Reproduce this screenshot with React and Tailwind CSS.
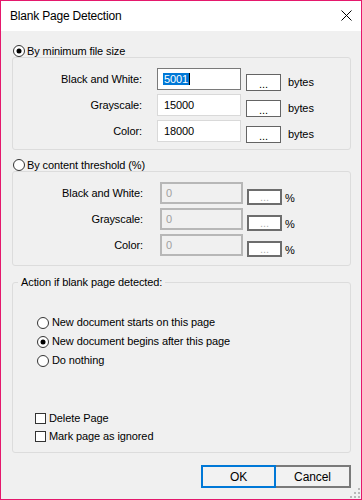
import React from "react";

const Radio = ({ checked }) => (
  <svg width="12" height="12" viewBox="0 0 12 12" className="shrink-0">
    <circle cx="6" cy="6" r="5.5" fill="#fff" stroke="#333" />
    {checked && <circle cx="6" cy="6" r="2.5" fill="#000" />}
  </svg>
);

const Checkbox = () => (
  <div className="w-[11px] h-[11px] shrink-0 border border-[#333] bg-white" />
);

const SizeRow = ({ label, value, selected }) => (
  <div className="flex items-start h-[22px]">
    <div className="w-[129px] h-[22px] flex items-center justify-end">{label}</div>
    <div
      className={
        "ml-[15px] w-[84px] h-[22px] bg-white border flex items-center pl-[5px] " +
        (selected ? "border-[#7a7a7a]" : "border-[#d9d9d9]")
      }
    >
      {selected ? (
        <>
          <span className="bg-[#0078d7] text-white leading-[12px] px-[1px]">{value}</span>
          <span className="w-px h-[12px] bg-black" />
        </>
      ) : (
        <span className="pl-[1px]">{value}</span>
      )}
    </div>
    <div className="ml-[5px] mt-[6px] h-[17px] flex items-center">
      <div className="w-[35px] h-[17px] border border-[#646464] bg-white flex items-end justify-center leading-[11px]">
        ...
      </div>
      <span className="ml-[7px] leading-[13px]">bytes</span>
    </div>
  </div>
);

const ThresholdRow = ({ label }) => (
  <div className="flex items-start h-[22px]">
    <div className="w-[130px] h-[22px] flex items-center justify-end">{label}</div>
    <div className="ml-[17px] w-[83px] h-[22px] border-2 border-[#b7b7b7] flex items-center pl-[4px] text-[#a0a0a0]">
      0
    </div>
    <div className="ml-[4px] mt-[7px] h-[16px] flex items-center">
      <div className="w-[35px] h-[16px] border-2 border-[#6d6d6d] bg-white flex items-end justify-center leading-[11px] text-[#b0b0b0]">
        ...
      </div>
      <span className="ml-[3px] mt-[3px] leading-[13px]">%</span>
    </div>
  </div>
);

export default function App() {
  return (
    <div className="relative w-[362px] h-[500px] border border-[#e5186c] bg-[#f0f0f0] flex flex-col font-['Liberation_Sans',Arial,sans-serif] text-[11px] leading-[13px] text-black tracking-[-0.1px]">
      <div className="h-[30px] shrink-0 bg-white flex items-start justify-between pl-[9px] pr-[9px]">
        <span className="mt-[8px] text-[12px] leading-[14px] tracking-[-0.2px]">Blank Page Detection</span>
        <svg width="11" height="11" viewBox="0 0 11 11" className="mt-[9px]">
          <path d="M0.5 0.5 L10.5 10.5 M10.5 0.5 L0.5 10.5" stroke="#000" strokeWidth="1" />
        </svg>
      </div>

      <div className="flex flex-col pl-[11px] pr-[10px]">
        <div className="mt-[14px] h-[12px] flex items-center pl-[1px]">
          <Radio checked />
          <span className="ml-[2px]">By minimum file size</span>
        </div>
        <div className="border border-[#dcdcdc] rounded-[3px] pt-[10px] pb-[7px] flex flex-col gap-[4px]">
          <SizeRow label="Black and White:" value="5001" selected />
          <SizeRow label="Grayscale:" value="15000" />
          <SizeRow label="Color:" value="18000" />
        </div>

        <div className="mt-[9px] h-[12px] flex items-center pl-[1px]">
          <Radio />
          <span className="ml-[2px]">By content threshold (%)</span>
        </div>
        <div className="border border-[#dcdcdc] rounded-[3px] pt-[10px] pb-[9px] flex flex-col gap-[4px]">
          <ThresholdRow label="Black and White:" />
          <ThresholdRow label="Grayscale:" />
          <ThresholdRow label="Color:" />
        </div>

        <div className="relative mt-[16px] border border-[#dcdcdc] rounded-[3px] pt-[30px] pb-[7px] flex flex-col">
          <span className="absolute -top-[7px] left-[5px] px-[3px] bg-[#f0f0f0] leading-[13px]">
            Action if blank page detected:
          </span>
          <div className="h-[19px] flex items-center pl-[24px]">
            <Radio />
            <span className="ml-[3px]">New document starts on this page</span>
          </div>
          <div className="h-[19px] flex items-center pl-[24px]">
            <Radio checked />
            <span className="ml-[3px]">New document begins after this page</span>
          </div>
          <div className="h-[19px] flex items-center pl-[24px]">
            <Radio />
            <span className="ml-[3px]">Do nothing</span>
          </div>
          <div className="mt-[39px] h-[18px] flex items-center pl-[22px]">
            <Checkbox />
            <span className="ml-[3px]">Delete Page</span>
          </div>
          <div className="h-[18px] flex items-center pl-[22px]">
            <Checkbox />
            <span className="ml-[3px]">Mark page as ignored</span>
          </div>
        </div>

        <div className="mt-[12px] flex justify-end">
          <button className="w-[75px] h-[23px] border-2 border-[#0078d7] bg-[#f2f2f2] text-[12px] leading-[14px]">OK</button>
          <button className="w-[75px] h-[23px] border-2 border-[#7a7a7a] border-l-0 bg-[#f2f2f2] text-[12px] leading-[14px]">Cancel</button>
        </div>
      </div>

      <svg width="10" height="10" viewBox="0 0 10 10" className="absolute right-[1px] bottom-[1px]">
        <rect x="8" y="0" width="2" height="2" fill="#b8b8b8" />
        <rect x="4" y="4" width="2" height="2" fill="#b8b8b8" />
        <rect x="8" y="4" width="2" height="2" fill="#b8b8b8" />
        <rect x="0" y="8" width="2" height="2" fill="#b8b8b8" />
        <rect x="4" y="8" width="2" height="2" fill="#b8b8b8" />
        <rect x="8" y="8" width="2" height="2" fill="#b8b8b8" />
      </svg>
    </div>
  );
}
